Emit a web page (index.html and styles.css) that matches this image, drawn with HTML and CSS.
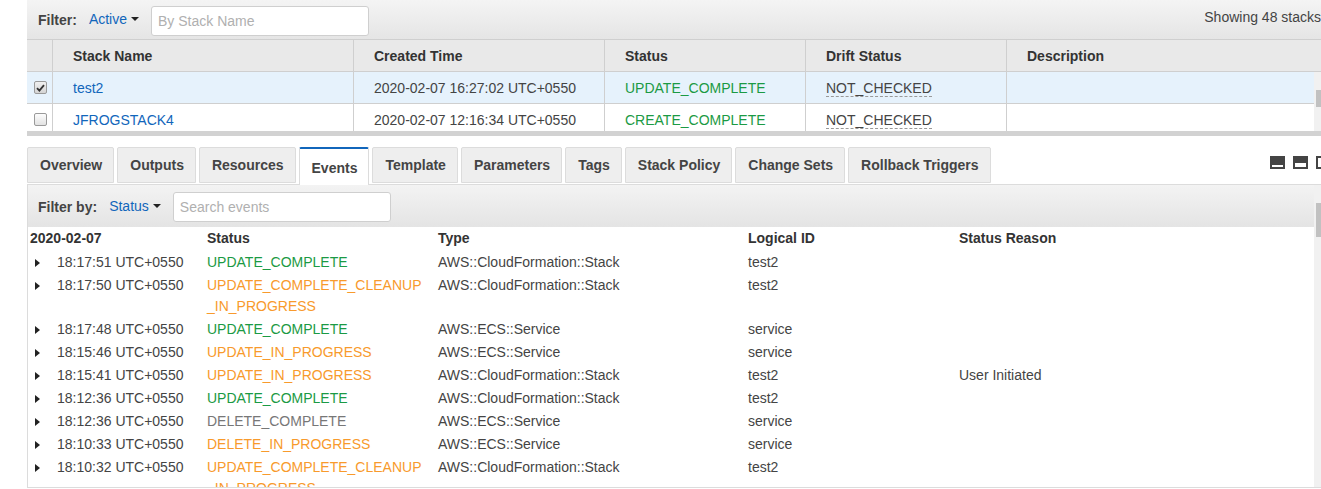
FILE: index.html
```html
<!DOCTYPE html>
<html>
<head>
<meta charset="utf-8">
<title>Stacks</title>
<link rel="stylesheet" href="styles.css">
</head>
<body>
<div class="app">
  <div class="toolbar">
    <span class="label">Filter:</span>
    <span class="dropdown">Active<span class="caret"></span></span>
    <input class="search" type="text" placeholder="By Stack Name">
    <span class="count">Showing 48 stacks</span>
  </div>

  <div class="stacks">
    <div class="srow shead">
      <div class="c cb"></div>
      <div class="c w-name">Stack Name</div>
      <div class="c w-time">Created Time</div>
      <div class="c w-status">Status</div>
      <div class="c w-drift">Drift Status</div>
      <div class="c w-desc">Description</div>
    </div>
    <div class="sbody">
      <div class="srows">
        <div class="srow selected">
          <div class="c cb"><span class="check checked"><svg width="9" height="8" viewBox="0 0 9 8"><path d="M1 4.2 L3.4 6.6 L8 1.2" fill="none" stroke="#333" stroke-width="1.8"/></svg></span></div>
          <div class="c w-name"><span class="link">test2</span></div>
          <div class="c w-time">2020-02-07 16:27:02 UTC+0550</div>
          <div class="c w-status"><span class="ok">UPDATE_COMPLETE</span></div>
          <div class="c w-drift"><span class="dashed">NOT_CHECKED</span></div>
          <div class="c w-desc"></div>
        </div>
        <div class="srow">
          <div class="c cb"><span class="check"></span></div>
          <div class="c w-name"><span class="link">JFROGSTACK4</span></div>
          <div class="c w-time">2020-02-07 12:16:34 UTC+0550</div>
          <div class="c w-status"><span class="ok">CREATE_COMPLETE</span></div>
          <div class="c w-drift"><span class="dashed">NOT_CHECKED</span></div>
          <div class="c w-desc"></div>
        </div>
      </div>
      <div class="vscroll vscroll-top"><div class="thumb"></div></div>
    </div>
  </div>

  <div class="splitter"></div>

  <div class="tabs">
    <div class="tab">Overview</div>
    <div class="tab">Outputs</div>
    <div class="tab">Resources</div>
    <div class="tab active">Events</div>
    <div class="tab">Template</div>
    <div class="tab">Parameters</div>
    <div class="tab">Tags</div>
    <div class="tab">Stack Policy</div>
    <div class="tab">Change Sets</div>
    <div class="tab">Rollback Triggers</div>
    <div class="layout-icons">
      <svg width="15" height="13" viewBox="0 0 15 13"><rect width="15" height="13" fill="#444"/><rect x="2" y="9" width="11" height="2" fill="#fff"/></svg>
      <svg width="15" height="13" viewBox="0 0 15 13"><rect width="15" height="13" fill="#444"/><rect x="2" y="7" width="11" height="4" fill="#fff"/></svg>
      <svg width="15" height="13" viewBox="0 0 15 13"><rect width="15" height="13" fill="#444"/><rect x="2" y="2" width="11" height="9" fill="#fff"/></svg>
    </div>
  </div>

  <div class="panel">
    <div class="panel-main">
      <div class="filterbar">
        <span class="label">Filter by:</span>
        <span class="dropdown">Status<span class="caret"></span></span>
        <input class="search search-events" type="text" placeholder="Search events">
      </div>
      <div class="events">
        <div class="erow ehead">
          <div class="e e1">2020-02-07</div>
          <div class="e e2">Status</div>
          <div class="e e3">Type</div>
          <div class="e e4">Logical ID</div>
          <div class="e e5">Status Reason</div>
        </div>
        <div class="erow">
          <div class="e e1"><span class="tri"></span>18:17:51 UTC+0550</div>
          <div class="e e2 ok">UPDATE_COMPLETE</div>
          <div class="e e3">AWS::CloudFormation::Stack</div>
          <div class="e e4">test2</div>
          <div class="e e5"></div>
        </div>
        <div class="erow">
          <div class="e e1"><span class="tri"></span>18:17:50 UTC+0550</div>
          <div class="e e2 prog">UPDATE_COMPLETE_CLEANUP<wbr>_IN_PROGRESS</div>
          <div class="e e3">AWS::CloudFormation::Stack</div>
          <div class="e e4">test2</div>
          <div class="e e5"></div>
        </div>
        <div class="erow">
          <div class="e e1"><span class="tri"></span>18:17:48 UTC+0550</div>
          <div class="e e2 ok">UPDATE_COMPLETE</div>
          <div class="e e3">AWS::ECS::Service</div>
          <div class="e e4">service</div>
          <div class="e e5"></div>
        </div>
        <div class="erow">
          <div class="e e1"><span class="tri"></span>18:15:46 UTC+0550</div>
          <div class="e e2 prog">UPDATE_IN_PROGRESS</div>
          <div class="e e3">AWS::ECS::Service</div>
          <div class="e e4">service</div>
          <div class="e e5"></div>
        </div>
        <div class="erow">
          <div class="e e1"><span class="tri"></span>18:15:41 UTC+0550</div>
          <div class="e e2 prog">UPDATE_IN_PROGRESS</div>
          <div class="e e3">AWS::CloudFormation::Stack</div>
          <div class="e e4">test2</div>
          <div class="e e5">User Initiated</div>
        </div>
        <div class="erow">
          <div class="e e1"><span class="tri"></span>18:12:36 UTC+0550</div>
          <div class="e e2 ok">UPDATE_COMPLETE</div>
          <div class="e e3">AWS::CloudFormation::Stack</div>
          <div class="e e4">test2</div>
          <div class="e e5"></div>
        </div>
        <div class="erow">
          <div class="e e1"><span class="tri"></span>18:12:36 UTC+0550</div>
          <div class="e e2 done">DELETE_COMPLETE</div>
          <div class="e e3">AWS::ECS::Service</div>
          <div class="e e4">service</div>
          <div class="e e5"></div>
        </div>
        <div class="erow">
          <div class="e e1"><span class="tri"></span>18:10:33 UTC+0550</div>
          <div class="e e2 prog">DELETE_IN_PROGRESS</div>
          <div class="e e3">AWS::ECS::Service</div>
          <div class="e e4">service</div>
          <div class="e e5"></div>
        </div>
        <div class="erow">
          <div class="e e1"><span class="tri"></span>18:10:32 UTC+0550</div>
          <div class="e e2 prog">UPDATE_COMPLETE_CLEANUP<wbr>_IN_PROGRESS</div>
          <div class="e e3">AWS::CloudFormation::Stack</div>
          <div class="e e4">test2</div>
          <div class="e e5"></div>
        </div>
      </div>
    </div>
    <div class="vscroll vscroll-events"><div class="thumb"></div></div>
  </div>
</div>
</body>
</html>
```

FILE: styles.css
```css
html, body {
  margin: 0;
  padding: 0;
  overflow: hidden;
  background: #fff;
}
body {
  width: 1321px;
  height: 489px;
  font-family: "Liberation Sans", Arial, sans-serif;
  font-size: 14px;
  color: #444;
}
.app {
  margin-left: 27px;
  width: 1310px;
}

/* top toolbar */
.toolbar {
  height: 39px;
  border-bottom: 1px solid #cfcfcf;
  background: linear-gradient(#f4f4f4, #e5e5e5);
  display: flex;
  align-items: center;
  padding: 0 16px 0 11px;
  box-sizing: content-box;
}
.label {
  font-weight: bold;
  color: #444;
}
.dropdown {
  color: #1166bb;
  margin-left: 12px;
  display: inline-flex;
  align-items: center;
  position: relative;
  top: -1px;
}
.caret {
  width: 0;
  height: 0;
  border-left: 4px solid transparent;
  border-right: 4px solid transparent;
  border-top: 4px solid #222;
  margin-left: 4px;
}
.search {
  margin-left: 12px;
  width: 218px;
  height: 30px;
  box-sizing: border-box;
  border: 1px solid #cfcfcf;
  border-radius: 3px;
  padding: 0 6px;
  font-family: "Liberation Sans", Arial, sans-serif;
  font-size: 14px;
  background: #fff;
  outline: none;
}
.search::placeholder {
  color: #b0b0b0;
}
.toolbar .search {
  margin-top: 2px;
}
.count {
  margin-left: auto;
  color: #444;
  position: relative;
  top: -3px;
}

/* stacks table */
.stacks {
  height: 91px;
  overflow: hidden;
}
.srow {
  display: flex;
  height: 32px;
  box-sizing: border-box;
  border-bottom: 1px solid #cfcfcf;
  background: #fff;
}
.shead {
  background: #e9e9e9;
  font-weight: bold;
  color: #333;
}
.srow.selected {
  background: #e6f2fc;
}
.c {
  box-sizing: border-box;
  border-left: 1px solid #cfcfcf;
  padding-left: 20px;
  display: flex;
  align-items: center;
  white-space: nowrap;
}
.c.cb {
  border-left: none;
  width: 25px;
  padding-left: 7px;
}
.w-name { width: 301px; }
.w-time { width: 251px; }
.w-status { width: 201px; }
.w-drift { width: 201px; }
.w-desc { flex: 1; }
.sbody {
  display: flex;
}
.srows {
  width: 1287px;
}
.link {
  color: #1166bb;
}
.ok {
  color: #1b9a44;
}
.prog {
  color: #f89a2c;
}
.done {
  color: #777;
}
.dashed {
  border-bottom: 1px dashed #999;
  line-height: 16px;
  margin-top: 2px;
}
.check {
  width: 11px;
  height: 11px;
  border: 1px solid #9a9a9a;
  border-radius: 2px;
  background: linear-gradient(#fdfdfd, #e2e2e2);
  display: flex;
  align-items: center;
  justify-content: center;
}
.check.checked {
  background: linear-gradient(#f0f0f0, #d4d4d4);
}

/* scrollbars */
.vscroll {
  width: 7px;
  background: #f1f1f1;
  flex: none;
  position: relative;
}
.vscroll .thumb {
  margin-left: 2px;
  background: #c1c1c1;
}
.vscroll-top {
  height: 60px;
}
.vscroll-top .thumb {
  margin-top: 18px;
  height: 17px;
}
.vscroll-events .thumb {
  margin-top: 18px;
  height: 34px;
}

.splitter {
  height: 5px;
  background: #d2d2d2;
  margin-bottom: 11px;
}

/* tabs */
.tabs {
  display: flex;
  align-items: flex-end;
  height: 37px;
  padding-right: 6px;
  position: relative;
}
.tab {
  height: 36px;
  box-sizing: border-box;
  margin-bottom: 1px;
  margin-right: 3px;
  padding: 0 11px 0 12px;
  background: #eee;
  border: 1px solid #dcdcdc;
  border-radius: 2px 2px 0 0;
  font-weight: bold;
  color: #444;
  display: flex;
  align-items: center;
  white-space: nowrap;
}
.tab.active {
  height: 38px;
  margin-bottom: -1px;
  background: #fff;
  border-top: 2px solid #1166bb;
  border-bottom: none;
  padding-top: 1px;
  position: relative;
  z-index: 2;
}
.layout-icons {
  margin-left: auto;
  display: flex;
  gap: 8px;
  align-self: center;
  margin-top: -6px;
}
.layout-icons svg {
  display: block;
}

/* events panel */
.panel {
  display: flex;
  height: 304px;
  box-sizing: border-box;
  border-top: 1px solid #dcdcdc;
  border-left: 1px solid #dcdcdc;
  border-bottom: 1px solid #dcdcdc;
  overflow: hidden;
}
.panel-main {
  width: 1286px;
  flex: none;
}
.filterbar {
  height: 42px;
  background: linear-gradient(#f3f3f3, #e4e4e4);
  display: flex;
  align-items: center;
  padding-left: 10px;
  padding-top: 2px;
  box-sizing: border-box;
}
.filterbar .dropdown {
  margin-left: 12px;
}
.search-events {
  margin-left: 12px;
}
.erow {
  display: grid;
  grid-template-columns: 179px 231px 310px 211px 1fr;
}
.e {
  line-height: 21px;
  padding: 1px 0;
  color: #444;
}
.ehead .e {
  font-weight: bold;
  color: #333;
  padding-bottom: 2px;
}
.e1 {
  padding-left: 2px;
  white-space: nowrap;
  display: flex;
  align-items: flex-start;
}
.erow:not(.ehead) .e1 {
  padding-left: 7px;
}
.tri {
  width: 0;
  height: 0;
  border-top: 4px solid transparent;
  border-bottom: 4px solid transparent;
  border-left: 5px solid #222;
  margin-top: 7px;
  margin-right: 17px;
}
.e2.ok { color: #1b9a44; }
.e2.prog { color: #f89a2c; }
.e2.done { color: #777; }
```
